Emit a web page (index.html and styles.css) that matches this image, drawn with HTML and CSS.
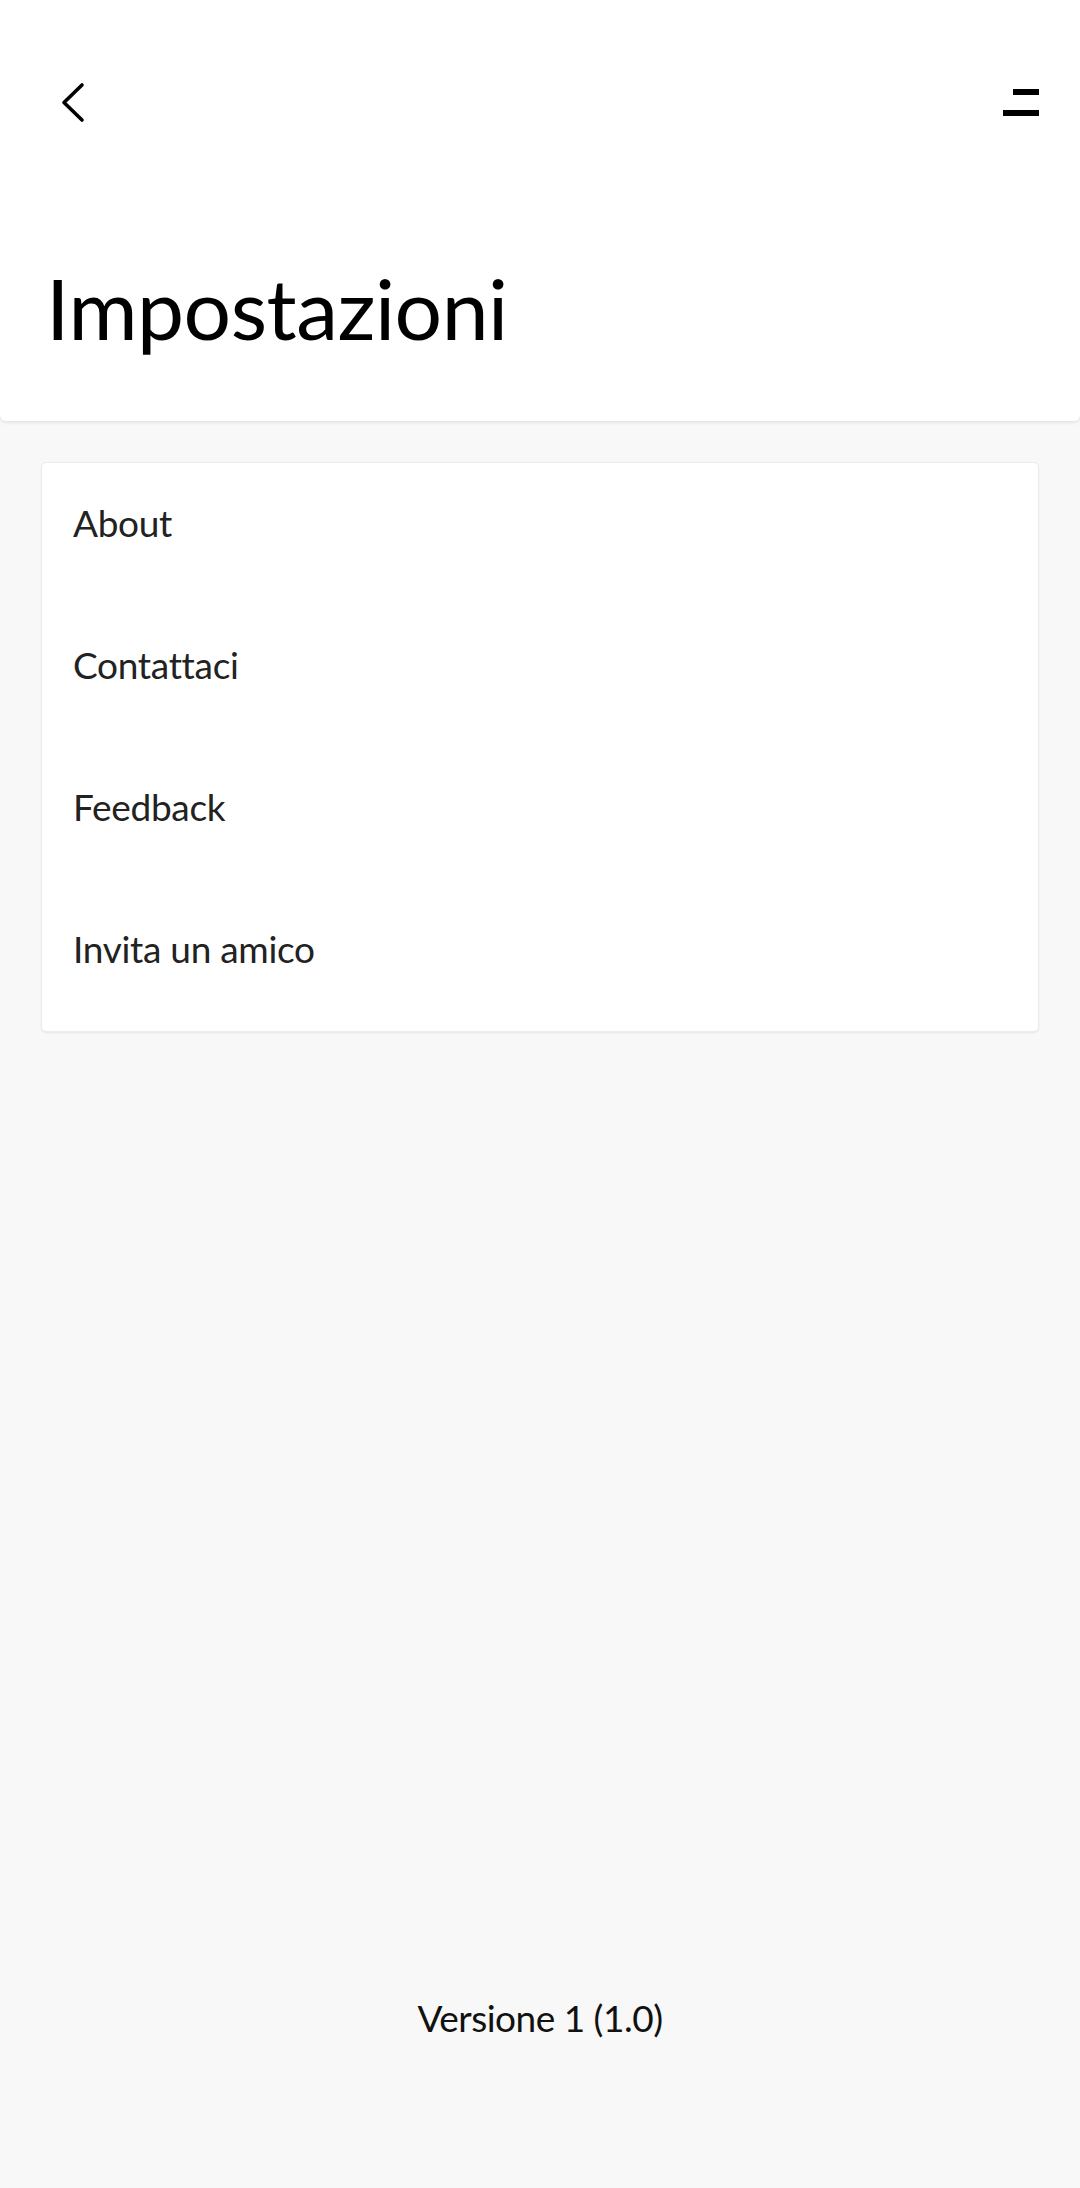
FILE: index.html
```html
<!DOCTYPE html>
<html lang="it">
<head>
<meta charset="utf-8">
<title>Impostazioni</title>
<link rel="stylesheet" href="styles.css">
</head>
<body>
<div class="page">
  <header class="appbar">
    <div class="toolbar">
      <button class="icon-btn back" aria-label="Indietro">
        <svg width="40" height="60" viewBox="0 0 40 60">
          <polyline points="31,15 13,32.5 31,50" fill="none" stroke="#000" stroke-width="3.6" stroke-linecap="round" stroke-linejoin="round"/>
        </svg>
      </button>
      <button class="icon-btn menu" aria-label="Menu">
        <svg width="36" height="27" viewBox="0 0 36 27">
          <rect x="10" y="0" width="26" height="6" fill="#000"/>
          <rect x="0" y="21" width="36" height="6" fill="#000"/>
        </svg>
      </button>
    </div>
    <h1 class="title">Impostazioni</h1>
  </header>

  <main class="content">
    <ul class="card">
      <li class="row">About</li>
      <li class="row">Contattaci</li>
      <li class="row">Feedback</li>
      <li class="row">Invita un amico</li>
    </ul>
  </main>

  <footer class="version">Versione 1 (1.0)</footer>
</div>
</body>
</html>
```

FILE: styles.css
```css
html, body {
  margin: 0;
  padding: 0;
}

body {
  background: #f8f8f8;
  font-family: "Lato", "Noto Sans", sans-serif;
  color: #222;
}

.page {
  min-height: 2188px;
  display: flex;
  flex-direction: column;
}

.appbar {
  background: #fff;
  border-radius: 0 0 6px 6px;
  box-shadow: 0 1px 4px rgba(0, 0, 0, 0.12);
  padding-bottom: 63px;
}

.toolbar {
  height: 200px;
  display: flex;
  align-items: center;
  justify-content: space-between;
  padding: 0 41px 0 51px;
}

.icon-btn {
  border: 0;
  background: none;
  padding: 0;
  margin: 0;
  display: flex;
  align-items: center;
  justify-content: center;
  cursor: pointer;
}

.icon-btn svg {
  display: block;
}

.menu {
  margin-top: 5px;
}

.title {
  margin: 58px 0 0 46px;
  font-size: 84px;
  line-height: 100px;
  font-weight: 400;
  color: #000;
  letter-spacing: -0.5px;
}

.content {
  flex: 1;
  padding: 41px 41px 0 41px;
}

.card {
  list-style: none;
  margin: 0;
  padding: 0;
  background: #fff;
  border: 1px solid #ececec;
  border-radius: 5px;
  box-shadow: 0 1px 2px rgba(0, 0, 0, 0.08);
}

.row {
  height: 142px;
  box-sizing: border-box;
  padding: 36px 31px 0;
  font-size: 37px;
  line-height: 48px;
  letter-spacing: -0.3px;
  color: #222;
}

.version {
  text-align: center;
  font-size: 37px;
  line-height: 48px;
  letter-spacing: -0.5px;
  color: #111;
  padding-bottom: 146px;
}
```
